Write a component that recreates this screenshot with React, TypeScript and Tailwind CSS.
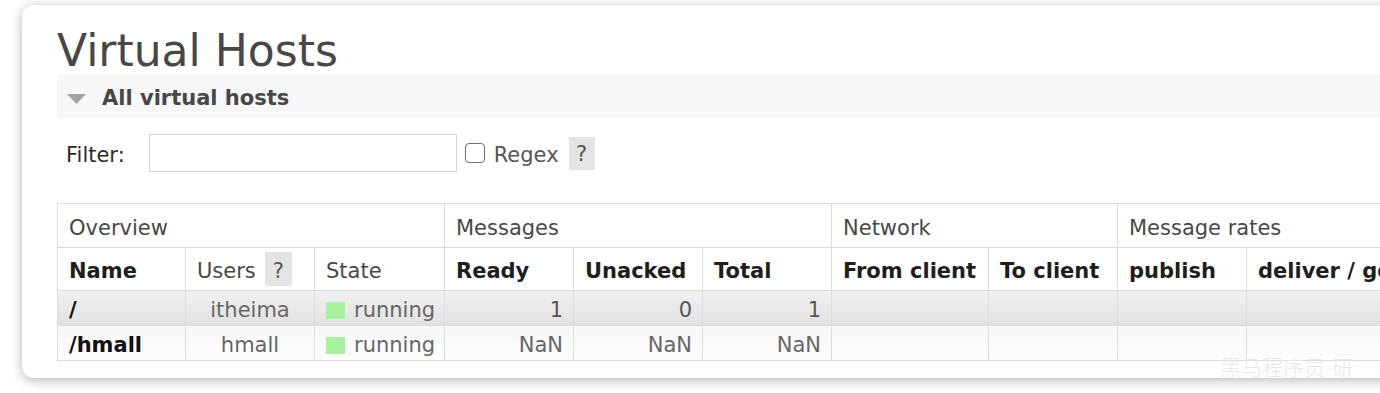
import React from 'react';

const cols = [128, 129, 130, 129, 129, 129, 157, 129, 129, 170];

function HelpBox({ className = '' }: { className?: string }) {
  return (
    <span className={`inline-flex items-center justify-center bg-[#e4e4e4] pt-[3px] text-[#555] ${className}`}>?</span>
  );
}

// green state marker + label
function StateCell() {
  return (
    <td className="border border-[#dcdcdc] pl-[11px] pt-[4px] text-left text-[#666]">
      <span className="flex items-center">
        <span className="mr-[9px] inline-block h-[17px] w-[19px] bg-[#a6f2a0]" />
        running
      </span>
    </td>
  );
}

export default function App() {
  const th1 = 'border border-[#dcdcdc] pl-[11px] pt-[4px] text-left font-normal text-[#484848]';
  const th2 = 'border border-[#dcdcdc] pl-[11px] pt-[4px] text-left font-bold text-[#1e1e1e]';
  const td = 'border border-[#dcdcdc] pt-[4px]';

  return (
    <div className="relative h-[393px] w-[1380px] overflow-hidden bg-white pl-[22px] pt-[5px] font-['DejaVu_Sans',Verdana,sans-serif]">
      <div className="h-[373px] w-[1440px] rounded-[12px] bg-white pl-[35px] pt-[21px] shadow-[0_2px_12px_rgba(0,0,0,0.3)]">
        <h1 className="text-[44px] leading-[49px] text-[#474747]">Virtual Hosts</h1>

        <div className="flex h-[43px] items-center bg-[#f7f7f7] pl-[10px] pt-[4px]">
          <svg width="19" height="10" viewBox="0 0 19 10" className="mt-[1px]">
            <polygon points="0,0 19,0 9.5,10" fill="#a3a3a3" />
          </svg>
          <span className="ml-[16px] text-[21px] font-bold text-[#474747]">All virtual hosts</span>
        </div>

        <div className="mt-[16px] flex h-[38px] items-center text-[21px]">
          <span className="ml-[9px] mt-[5px] text-[#2b2b2b]">Filter:</span>
          <input
            type="text"
            className="ml-[24px] h-[38px] w-[308px] border border-[#d2d2d2] bg-white outline-none"
          />
          <input
            type="checkbox"
            className="ml-[8px] h-[20px] w-[20px] appearance-none rounded-[4px] border-[1.5px] border-[#707070] bg-white"
          />
          <span className="ml-[9px] mt-[5px] text-[#555]">Regex</span>
          <HelpBox className="ml-[10px] h-[33px] w-[26px]" />
        </div>

        <table className="mt-[31px] table-fixed border-collapse text-[21px] leading-[24px]">
          <colgroup>
            {cols.map((w, i) => (
              <col key={i} style={{ width: w }} />
            ))}
          </colgroup>
          <thead>
            <tr className="h-[44px]">
              <th colSpan={3} className={th1}>Overview</th>
              <th colSpan={3} className={th1}>Messages</th>
              <th colSpan={2} className={th1}>Network</th>
              <th colSpan={2} className={th1}>Message rates</th>
            </tr>
            <tr className="h-[43px]">
              <th className={th2}>Name</th>
              <th className="border border-[#dcdcdc] pl-[11px] text-left font-normal text-[#484848]">
                <span className="flex items-center">
                  <span className="mt-[4px]">Users</span>
                  <HelpBox className="ml-[9px] h-[34px] w-[27px]" />
                </span>
              </th>
              <th className={th1}>State</th>
              <th className={th2}>Ready</th>
              <th className={th2}>Unacked</th>
              <th className={th2}>Total</th>
              <th className={th2}>From client</th>
              <th className={th2}>To client</th>
              <th className={th2}>publish</th>
              <th className={`${th2} whitespace-nowrap`}>deliver / get</th>
            </tr>
          </thead>
          <tbody>
            <tr className="h-[35px] bg-linear-to-b from-[#f1f1f1] to-[#e1e1e1]">
              <td className={`${td} pl-[11px] font-bold text-[#111]`}>/</td>
              <td className={`${td} text-center text-[#666]`}>itheima</td>
              <StateCell />
              <td className={`${td} pr-[10px] text-right text-[#555]`}>1</td>
              <td className={`${td} pr-[10px] text-right text-[#555]`}>0</td>
              <td className={`${td} pr-[10px] text-right text-[#555]`}>1</td>
              <td className={td} />
              <td className={td} />
              <td className={td} />
              <td className={td} />
            </tr>
            <tr className="h-[35px] bg-linear-to-b from-[#f7f7f7] to-[#fdfdfd]">
              <td className={`${td} pl-[11px] font-bold text-[#111]`}>/hmall</td>
              <td className={`${td} text-center text-[#666]`}>hmall</td>
              <StateCell />
              <td className={`${td} pr-[10px] text-right text-[#666]`}>NaN</td>
              <td className={`${td} pr-[10px] text-right text-[#666]`}>NaN</td>
              <td className={`${td} pr-[10px] text-right text-[#666]`}>NaN</td>
              <td className={td} />
              <td className={td} />
              <td className={td} />
              <td className={td} />
            </tr>
          </tbody>
        </table>
      </div>

      <span className="pointer-events-none absolute left-[1220px] top-[351px] whitespace-nowrap font-['Noto_Sans_CJK_SC',sans-serif] text-[21px] font-light text-[#e8e8e8]">
        黑马程序员-研
      </span>
    </div>
  );
}
